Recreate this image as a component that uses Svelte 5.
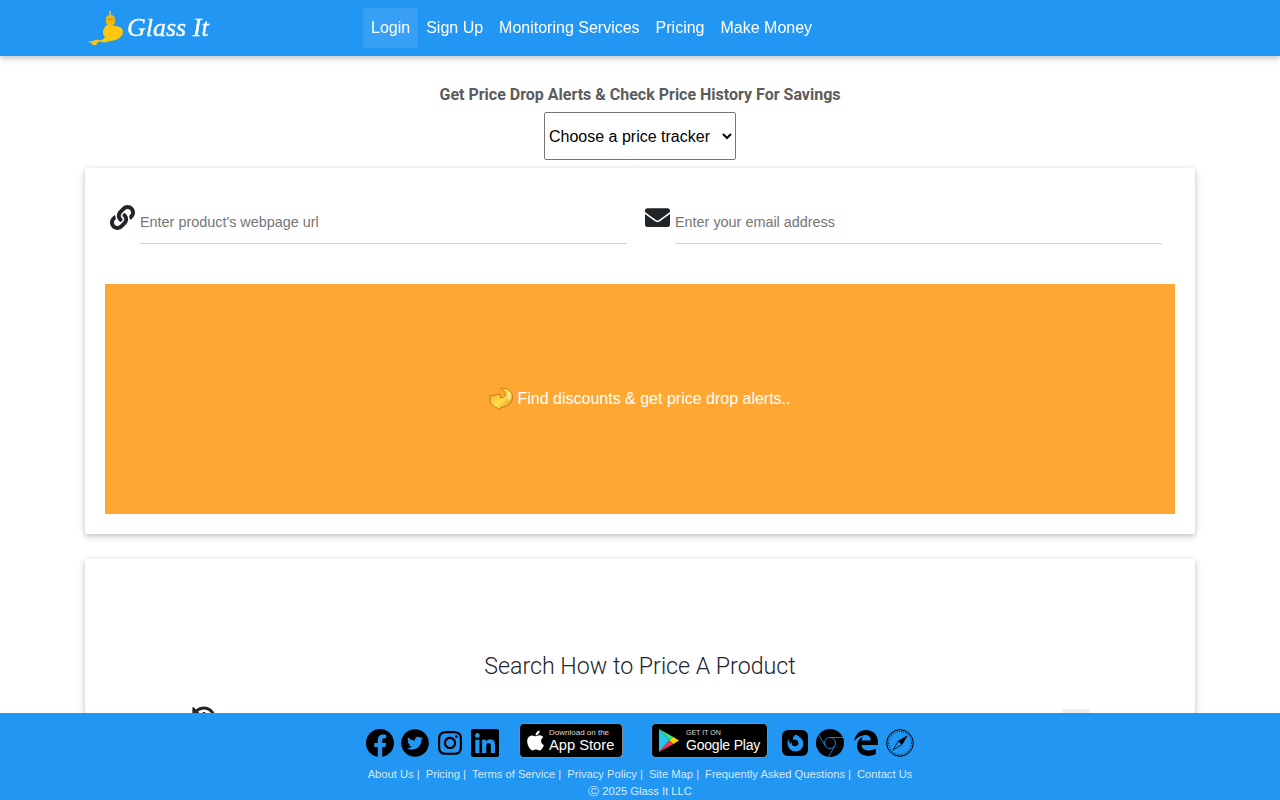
<script>
  const navLinks = ["Login", "Sign Up", "Monitoring Services", "Pricing", "Make Money"];
  const footerLinks = ["About Us", "Pricing", "Terms of Service", "Privacy Policy", "Site Map", "Frequently Asked Questions"];
</script>

<nav class="navbar">
  <div class="nav-inner">
    <a class="brand" href="#home">
      <svg class="genie" viewBox="0 0 36 36" width="36" height="36" aria-hidden="true">
        <path fill="#fdc70f" d="M21.500 1h1.200l.3 3.500h-1.800z"/>
        <ellipse fill="#f2b90c" cx="22.500" cy="10.500" rx="4.700" ry="6"/>
        <path fill="#fdc70f" d="M19 15C14 19 14 24 17 27 15 30 13 31 10 30 13 33 18 33 22 31 28 31 35 27 35 22 35 18 31 16 27 16z"/>
        <path fill="#c99a12" d="M19.500 8.500h6v1.500h-6z"/>
        <path fill="#fdc70f" d="M0 31l4 .5C6 30 9 29.500 11 30h2c-2 2-4 3-5 4l1 1H4l1-1c-2-1-4-2-5-3z"/>
      </svg>
      <span class="brand-text">Glass It</span>
    </a>
    <ul class="nav-links">
      {#each navLinks as link, i}
        <li><a href="#home" class:active={i === 0}>{link}</a></li>
      {/each}
    </ul>
  </div>
</nav>

<main>
  <section class="tracker">
    <h1>Get Price Drop Alerts &amp; Check Price History For Savings</h1>
    <select aria-label="Price tracker">
      <option>Choose a price tracker</option>
      <option>Amazon</option>
      <option>Walmart</option>
    </select>
  </section>

  <section class="card form-card">
    <div class="fields">
      <div class="field">
        <svg class="field-icon" viewBox="0 0 512 512" width="25" height="25" aria-hidden="true"><path d="M326.612 185.391c59.747 59.809 58.927 155.698.36 214.59-.11.12-.24.25-.36.37l-67.2 67.2c-59.27 59.27-155.699 59.262-214.96 0-59.27-59.26-59.27-155.7 0-214.96l37.106-37.106c9.84-9.84 26.786-3.3 27.294 10.606.648 17.722 3.826 35.527 9.69 52.721 1.986 5.822.567 12.262-3.783 16.612l-13.087 13.087c-28.026 28.026-28.905 73.66-1.155 101.96 28.024 28.579 74.086 28.749 102.325.51l67.2-67.19c28.191-28.191 28.073-73.757 0-101.83-3.701-3.694-7.429-6.564-10.341-8.569a16.037 16.037 0 0 1-6.947-12.606c-.396-10.567 3.348-21.456 11.698-29.806l21.054-21.055c5.521-5.521 14.182-6.199 20.584-1.731a152.482 152.482 0 0 1 20.522 17.197zM467.547 44.449c-59.261-59.262-155.69-59.27-214.96 0l-67.2 67.2c-.12.12-.25.25-.36.37-58.566 58.892-59.387 154.781.36 214.59a152.454 152.454 0 0 0 20.521 17.196c6.402 4.468 15.064 3.789 20.584-1.731l21.054-21.055c8.35-8.35 12.094-19.239 11.698-29.806a16.037 16.037 0 0 0-6.947-12.606c-2.912-2.005-6.64-4.875-10.341-8.569-28.073-28.073-28.191-73.639 0-101.83l67.2-67.19c28.239-28.239 74.3-28.069 102.325.51 27.75 28.3 26.872 73.934-1.155 101.96l-13.087 13.087c-4.35 4.35-5.769 10.79-3.783 16.612 5.864 17.194 9.042 34.999 9.69 52.721.509 13.906 17.454 20.446 27.294 10.606l37.106-37.106c59.271-59.259 59.271-155.699.001-214.959z"/></svg>
        <input type="text" placeholder="Enter product's webpage url" />
      </div>
      <div class="field">
        <svg class="field-icon" viewBox="0 0 512 512" width="25" height="25" aria-hidden="true"><path d="M502.3 190.8c3.9-3.1 9.7-.2 9.7 4.7V400c0 26.5-21.500 48-48 48H48c-26.500 0-48-21.500-48-48V195.600c0-5 5.700-7.800 9.700-4.700 22.400 17.400 52.100 39.500 154.100 113.600 21.100 15.400 56.700 47.800 92.200 47.600 35.700.3 72-32.800 92.300-47.600 102-74.100 131.600-96.300 154-113.700zM256 320c23.200.4 56.600-29.200 73.400-41.400 132.700-96.300 142.800-104.700 173.400-128.700 5.800-4.500 9.200-11.500 9.200-18.900v-19c0-26.500-21.500-48-48-48H48C21.500 64 0 85.500 0 112v19c0 7.400 3.400 14.300 9.200 18.900 30.600 23.900 40.700 32.400 173.400 128.700 16.800 12.200 50.200 41.800 73.400 41.400z"/></svg>
        <input type="email" placeholder="Enter your email address" />
      </div>
    </div>
    <button class="search-btn" type="button">
      <svg viewBox="0 0 24 24" width="24" height="24" aria-hidden="true">
        <defs>
          <linearGradient id="arrowFill" x1="0" y1="0" x2="1" y2="1">
            <stop offset="0" stop-color="#ef9a1a" />
            <stop offset="0.55" stop-color="#ffe04a" />
            <stop offset="1" stop-color="#e07a0c" />
          </linearGradient>
        </defs>
        <path fill="url(#arrowFill)" stroke="#b0651a" stroke-width=".7" d="M11.500 1.500C18-.5 24 4.500 23.500 11 23 17 18 20.500 12 20l-.5 3-10-6-1-8L11 7l.5 4c2.500 0 4.500-1 5-3 .5-2.500-2-5-5-6.500z"/>
        <ellipse fill="#fff" opacity=".5" cx="20.300" cy="9" rx="1.300" ry="4"/>
      </svg>
      <span>Find discounts &amp; get price drop alerts..</span>
    </button>
  </section>

  <section class="card search-card">
    <h2>Search How to Price A Product</h2>
    <div class="search-row">
      <svg viewBox="0 0 512 512" width="24" height="24" aria-hidden="true"><path d="M504 255.531c.253 136.64-111.18 248.372-247.82 248.468-59.015.042-113.223-20.53-155.822-54.911-11.077-8.94-11.905-25.541-1.839-35.607l11.267-11.267c8.609-8.609 22.353-9.551 31.891-1.984C173.062 425.135 212.781 440 256 440c101.705 0 184-82.311 184-184 0-101.705-82.311-184-184-184-48.814 0-93.149 18.969-126.068 49.932l50.754 50.754c10.08 10.08 2.941 27.314-11.313 27.314H24c-8.837 0-16-7.163-16-16V38.627c0-14.254 17.234-21.393 27.314-11.314l49.372 49.372C129.209 34.136 189.552 8 256 8c136.81 0 247.747 110.78 248 247.531zm-180.912 78.784l9.823-12.63c8.138-10.463 6.253-25.542-4.21-33.679L288 256.349V152c0-13.255-10.745-24-24-24h-16c-13.255 0-24 10.745-24 24v135.651l65.409 50.874c10.463 8.137 25.541 6.253 33.679-4.21z"/></svg>
      <input class="product-input" type="text" aria-label="Product" />
      <span class="search-box"></span>
    </div>
  </section>
</main>

<footer>
  <div class="badges">
    <svg class="i-fb" viewBox="8 8 496 496" width="28" height="28" aria-hidden="true"><path d="M504 256C504 119 393 8 256 8S8 119 8 256c0 123.78 90.69 226.38 209.25 245V327.69h-63V256h63v-54.64c0-62.15 37-96.48 93.67-96.48 27.14 0 55.52 4.84 55.52 4.84v61h-31.28c-30.8 0-40.41 19.12-40.41 38.73V256h68.78l-11 71.69h-57.78V501C413.31 482.38 504 379.78 504 256z"/></svg>
    <svg class="i-tw" viewBox="0 0 28 28" width="28" height="28" aria-hidden="true">
      <circle cx="14" cy="14" r="13.800" />
      <path fill="#2196f3" transform="translate(6 6.200) scale(.0312)" d="M459.37 151.716c.325 4.548.325 9.097.325 13.645 0 138.72-105.583 298.558-298.558 298.558-59.452 0-114.68-17.219-161.137-47.106 8.447.974 16.568 1.299 25.34 1.299 49.055 0 94.213-16.568 130.274-44.832-46.132-.975-84.792-31.188-98.112-72.772 6.498.974 12.995 1.624 19.818 1.624 9.421 0 18.843-1.3 27.614-3.573-48.081-9.747-84.143-51.98-84.143-102.985v-1.299c13.969 7.797 30.214 12.67 47.431 13.319-28.264-18.843-46.781-51.005-46.781-87.391 0-19.492 5.197-37.36 14.294-52.954 51.655 63.675 129.3 105.258 216.365 109.807-1.624-7.797-2.599-15.918-2.599-24.04 0-57.828 46.782-104.934 104.934-104.934 30.213 0 57.502 12.67 76.67 33.137 23.715-4.548 46.456-13.32 66.599-25.34-7.798 24.366-24.366 44.833-46.132 57.827 21.117-2.273 41.584-8.122 60.426-16.243-14.292 20.791-32.161 39.308-52.628 54.253z"/>
    </svg>
    <svg class="i-ig" viewBox="0 31 448 450" width="24" height="24" aria-hidden="true"><path d="M224.1 141c-63.6 0-114.9 51.3-114.9 114.9s51.3 114.9 114.9 114.9S339 319.5 339 255.9 287.7 141 224.1 141zm0 189.6c-41.1 0-74.7-33.5-74.7-74.7s33.5-74.7 74.7-74.7 74.7 33.5 74.7 74.7-33.6 74.7-74.7 74.7zm146.4-194.3c0 14.9-12 26.8-26.8 26.8-14.9 0-26.8-12-26.8-26.8s12-26.8 26.8-26.8 26.8 12 26.8 26.8zm76.1 27.2c-1.7-35.9-9.9-67.7-36.2-93.9-26.2-26.2-58-34.4-93.9-36.2-37-2.1-147.9-2.1-184.9 0-35.8 1.7-67.6 9.9-93.9 36.1s-34.4 58-36.2 93.9c-2.1 37-2.1 147.9 0 184.9 1.7 35.9 9.9 67.7 36.2 93.9s58 34.4 93.9 36.2c37 2.1 147.9 2.1 184.9 0 35.9-1.7 67.7-9.9 93.9-36.2 26.2-26.2 34.4-58 36.2-93.9 2.1-37 2.1-147.8 0-184.8zM398.8 388c-7.8 19.6-22.9 34.7-42.6 42.6-29.5 11.7-99.5 9-132.1 9s-102.7 2.6-132.1-9c-19.6-7.8-34.7-22.9-42.6-42.6-11.7-29.5-9-99.5-9-132.1s-2.6-102.7 9-132.1c7.8-19.6 22.9-34.7 42.6-42.6 29.5-11.7 99.5-9 132.1-9s102.7-2.6 132.1 9c19.6 7.8 34.7 22.9 42.6 42.6 11.7 29.5 9 99.5 9 132.1s2.7 102.7-9 132.1z"/></svg>
    <svg class="i-in" viewBox="0 32 448 448" width="28" height="28" aria-hidden="true"><path d="M416 32H31.9C14.3 32 0 46.5 0 64.3v383.4C0 465.5 14.3 480 31.9 480H416c17.6 0 32-14.5 32-32.3V64.3c0-17.8-14.4-32.3-32-32.3zM135.4 416H69V202.2h66.5V416zm-33.2-243c-21.3 0-38.5-17.3-38.5-38.5S80.9 96 102.2 96c21.2 0 38.5 17.3 38.5 38.500 0 21.300-17.200 38.500-38.500 38.500zm282.100 243h-66.400V312c0-24.800-.5-56.700-34.500-56.700-34.600 0-39.900 27-39.900 54.900V416h-66.400V202.200h63.700v29.200h.9c8.900-16.800 30.600-34.500 62.900-34.500 67.200 0 79.700 44.300 79.700 101.900V416z"/></svg>

    <div class="store app-store">
      <svg viewBox="0 0 384 512" width="17" height="23" aria-hidden="true"><path fill="#fff" d="M318.7 268.7c-.2-36.7 16.4-64.4 50-84.8-18.8-26.9-47.2-41.7-84.7-44.6-35.5-2.8-74.3 20.7-88.5 20.7-15 0-49.4-19.7-76.4-19.7C63.3 141.2 4 184.8 4 273.5q0 39.3 14.4 81.2c12.8 36.7 59 126.7 107.2 125.2 25.2-.6 43-17.9 75.8-17.9 31.8 0 48.3 17.9 76.4 17.9 48.6-.7 90.4-82.5 102.6-119.3-65.2-30.7-61.700-90-61.700-91.900zm-56.600-164.200c27.300-32.400 24.800-61.900 24-72.500-24.100 1.400-52 16.400-67.900 34.900-17.500 19.800-27.800 44.300-25.600 71.900 26.100 2 49.900-11.400 69.500-34.300z"/></svg>
      <div class="store-text">
        <span class="small">Download on the</span>
        <span class="large">App Store</span>
      </div>
    </div>

    <div class="store play-store">
      <svg viewBox="0 0 20 23" width="20" height="23" aria-hidden="true">
        <path fill="#27c3f3" d="M0 0l10.500 11.500L0 23z"/>
        <path fill="#3ddc84" d="M0 0l14.500 8-4 3.500z"/>
        <path fill="#f4364c" d="M0 23l14.500-8-4-3.500z"/>
        <path fill="#fdd400" d="M14.500 8l5.500 3.500-5.500 3.500-4-3.500z"/>
      </svg>
      <div class="store-text">
        <span class="small play-small">GET IT ON</span>
        <span class="large play-large">Google Play</span>
      </div>
    </div>

    <svg class="i-ff" viewBox="0 0 26 26" width="26" height="26" aria-hidden="true">
      <rect width="26" height="26" rx="6" />
      <circle fill="#2196f3" cx="13.500" cy="13.800" r="7.800" />
      <path d="M4 6h8l2 2.500-3 2.500-3 3H4z" />
      <circle cx="13" cy="13" r="3.300" />
      <path fill="#2196f3" d="M14 4.500l3.500 2.500-3 2c-1.500-.3-3 .3-3.500 1.500-.5-2.500.5-4.800 3-6zM6.500 8.500c-.3 2 .5 3.500 2 4.500l-2.500 2c-.7-2.300-.5-4.700.5-6.500z" />
    </svg>
    <svg class="i-ch" viewBox="0 0 28 28" width="28" height="28" aria-hidden="true">
      <circle cx="14" cy="14" r="14" />
      <g fill="none" stroke="#2196f3" stroke-width=".8">
        <circle cx="14" cy="14" r="5.500" />
        <path d="M14 8.500h13M18.800 16.800L12.500 27.800M9.200 16.800L2.800 5.800" />
      </g>
    </svg>
    <svg class="i-ed" viewBox="25 8 462 496" width="24" height="26" aria-hidden="true"><path d="M25.714 228.163c.111-.162.23-.323.342-.485-.021.162-.045.323-.065.485h-.277zm460.572 15.508c0-44.032-7.754-84.465-28.801-122.405C416.498 47.879 343.912 8.001 258.893 8.001 118.962 7.724 40.617 113.214 26.056 227.679c42.429-61.312 117.073-121.376 220.375-124.966 0 0 109.666 0 99.419 104.957H169.997c6.369-37.386 18.554-58.986 34.339-78.926-75.048 34.893-121.85 96.096-120.742 188.315.83 71.448 50.124 144.836 120.743 171.976 83.357 31.847 192.776 7.2 240.132-21.324V363.307c-80.864 56.494-270.871 60.925-272.118-69.41h314.659c.554-27.686 1.276-37.86 1.276-50.226z"/></svg>
    <svg class="i-sa" viewBox="0 0 28 28" width="28" height="28" aria-hidden="true">
      <circle cx="14" cy="14" r="13.300" fill="none" stroke="#000" stroke-width="1" />
      <circle cx="14" cy="14" r="11.500" fill="none" stroke="#000" stroke-width="1.200" stroke-dasharray=".7 1.500" />
      <path fill="none" stroke="#000" stroke-width=".8" d="M21 7l-8.800 5.200-5.200 8.800 8.800-5.200z" />
      <path d="M21 7l-8.800 5.200 3.600 3.600z" />
    </svg>
  </div>
  <div class="footer-links">
    {#each footerLinks as link}
      <span class="footer-item"><a href="#home">{link}</a> |</span>
    {/each}
    <a href="#home">Contact Us</a>
  </div>
  <div class="copy">Ⓒ 2025 Glass It LLC</div>
</footer>

<style>
  :global(body) {
    font-family: "Liberation Sans", Arial, sans-serif;
    background: #fff;
    color: #212529;
  }

  .navbar {
    position: fixed;
    top: 0;
    left: 0;
    right: 0;
    z-index: 10;
    height: 56px;
    background: #2196f3;
    box-shadow: 0 2px 5px rgba(0, 0, 0, 0.16), 0 2px 10px rgba(0, 0, 0, 0.12);
  }

  .nav-inner {
    width: 1110px;
    margin: 0 auto;
    height: 56px;
    display: flex;
    align-items: center;
  }

  .brand {
    width: 278px;
    display: flex;
    align-items: center;
    color: #fff;
    text-decoration: none;
  }

  .genie {
    margin: 0 3px;
    flex: none;
  }

  .brand-text {
    font-family: "Liberation Serif", serif;
    font-style: italic;
    font-size: 26px;
    -webkit-text-stroke: 0.3px #fff;
    white-space: nowrap;
  }

  .nav-links {
    list-style: none;
    margin: 0;
    padding: 0;
    display: flex;
  }

  .nav-links a {
    display: block;
    padding: 8px;
    height: 24px;
    line-height: 24px;
    font-size: 16px;
    color: #fff;
    text-decoration: none;
  }

  .nav-links a.active {
    background: rgba(255, 255, 255, 0.1);
  }

  main {
    width: 1110px;
    margin: 0 auto;
    padding: 56px 0 120px;
  }

  .tracker {
    display: flex;
    flex-direction: column;
    align-items: center;
    padding-top: 29px;
  }

  h1 {
    margin: 0 0 7px;
    font-family: Roboto, sans-serif;
    font-size: 16px;
    font-weight: 700;
    line-height: 20px;
    color: #5c5c5c;
  }

  select {
    width: 192px;
    height: 48px;
    font-family: "Liberation Sans", Arial, sans-serif;
    font-size: 16px;
    color: #000;
    background: #fff;
    border: 1px solid #767676;
    border-radius: 2px;
  }

  .card {
    background: #fff;
    box-shadow: 0 2px 5px rgba(0, 0, 0, 0.16), 0 2px 10px rgba(0, 0, 0, 0.12);
    border-radius: 2px;
  }

  .form-card {
    margin-top: 8px;
    padding: 20px;
  }

  .fields {
    display: grid;
    grid-template-columns: 1fr 1fr;
    padding-top: 16px;
  }

  .field {
    display: flex;
    align-items: flex-start;
    padding: 0 13px 0 5px;
  }

  .field-icon {
    flex: none;
    margin: 1px 5px 0 0;
    fill: #212529;
  }

  .field input {
    flex: 1;
    min-width: 0;
    height: 40px;
    box-sizing: border-box;
    padding: 0 0 4px;
    border: 0;
    border-bottom: 1px solid #ced4da;
    outline: 0;
    font-family: "Liberation Sans", Arial, sans-serif;
    font-size: 14.400px;
    color: #495057;
    background: transparent;
  }

  .field input::placeholder {
    color: #757575;
    opacity: 1;
  }

  .search-btn {
    width: 100%;
    height: 230px;
    margin-top: 40px;
    display: flex;
    align-items: center;
    justify-content: center;
    gap: 4px;
    border: 0;
    background: #ffa733;
    color: #fff;
    font-family: "Liberation Sans", Arial, sans-serif;
    font-size: 16px;
  }

  .search-card {
    margin-top: 25px;
    padding: 91px 20px 60px;
  }

  h2 {
    margin: 0;
    font-family: Roboto, sans-serif;
    font-size: 23.200px;
    font-weight: 300;
    line-height: 32px;
    text-align: center;
    color: #212529;
  }

  .search-row {
    margin-top: 24px;
    padding-left: 87px;
    display: flex;
    align-items: flex-start;
    gap: 12px;
    fill: #212529;
  }

  .product-input {
    flex: 1;
    height: 40px;
    border: 0;
    border-bottom: 1px solid #ced4da;
    outline: 0;
  }

  .search-box {
    flex: none;
    width: 28px;
    height: 40px;
    margin: 3px 85px 0 -12px;
    background: #eee;
  }

  footer {
    position: fixed;
    left: 0;
    right: 0;
    bottom: 0;
    z-index: 10;
    height: 87px;
    background: #2196f3;
    display: flex;
    flex-direction: column;
    align-items: center;
  }

  .badges {
    height: 35px;
    margin-top: 10px;
    display: flex;
    align-items: center;
    flex: none;
  }

  .badges > svg {
    flex: none;
    margin-top: 4px;
  }

  .i-tw { margin-left: 7px; }
  .i-ig { margin-left: 9px; }
  .i-in { margin-left: 9px; }
  .i-ff { margin-left: 14px; }
  .i-ch { margin-left: 8px; }
  .i-ed { margin-left: 10px; }
  .i-sa { margin-left: 8px; }

  .store {
    height: 35px;
    box-sizing: border-box;
    display: flex;
    align-items: center;
    background: #000;
    border: 1px solid #8a8a8a;
    border-radius: 5px;
    color: #fff;
  }

  .app-store {
    width: 104px;
    margin-left: 20px;
    padding-left: 7px;
    gap: 5px;
  }

  .play-store {
    width: 117px;
    margin-left: 28px;
    padding-left: 7px;
    gap: 7px;
  }

  .store-text {
    display: flex;
    flex-direction: column;
    white-space: nowrap;
  }

  .small {
    font-size: 8px;
    line-height: 9px;
    color: #ddd;
  }

  .large {
    font-size: 14.700px;
    line-height: 17px;
  }

  .play-small {
    font-size: 7px;
  }

  .play-large {
    font-size: 14px;
    letter-spacing: -0.2px;
  }

  .footer-links {
    margin-top: 8px;
    display: flex;
    gap: 6px;
    font-size: 11.200px;
    line-height: 16px;
    color: #d5e9fb;
  }

  .footer-links a {
    color: inherit;
    text-decoration: none;
  }

  .copy {
    margin-top: 1px;
    font-size: 11.200px;
    line-height: 16px;
    color: #dcedfc;
  }
</style>
